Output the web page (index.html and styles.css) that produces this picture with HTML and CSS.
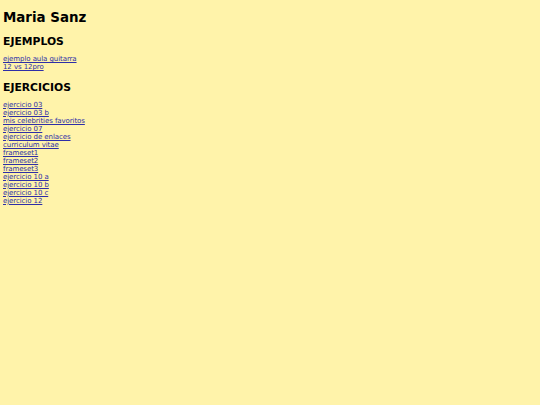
FILE: index.html
```html
<!DOCTYPE html>
<html>
<head>
<meta charset="utf-8">
<link rel="stylesheet" href="styles.css">
</head>
<body>
<h1 class="title">Maria Sanz</h1>
<h2 class="section">EJEMPLOS</h2>
<ul class="links">
<li><a href="#">ejemplo aula guitarra</a></li>
<li><a href="#">12 vs 12pro</a></li>
</ul>
<h2 class="section">EJERCICIOS</h2>
<ul class="links">
<li><a href="#">ejercicio 03</a></li>
<li><a href="#">ejercicio 03 b</a></li>
<li><a href="#">mis celebrities favoritos</a></li>
<li><a href="#">ejercicio 07</a></li>
<li><a href="#">ejercicio de enlaces</a></li>
<li><a href="#">curriculum vitae</a></li>
<li><a href="#">frameset1</a></li>
<li><a href="#">frameset2</a></li>
<li><a href="#">frameset3</a></li>
<li><a href="#">ejercicio 10 a</a></li>
<li><a href="#">ejercicio 10 b</a></li>
<li><a href="#">ejercicio 10 c</a></li>
<li><a href="#">ejercicio 12</a></li>
</ul>
</body>
</html>
```
FILE: styles.css
```css
html, body {
  background: #fff3aa;
}
body {
  margin: 3px;
  font-family: "DejaVu Sans", Verdana, sans-serif;
  color: #000;
}
.title {
  font-size: 13.4px;
  font-weight: bold;
  margin: 7px 0 0 0;
  line-height: 16px;
}
.section {
  font-size: 10.8px;
  font-weight: bold;
  margin: 9.2px 0 0 0;
  line-height: 14px;
}
.links {
  list-style: none;
  margin: 6.2px 0 0 0;
  padding: 0;
  font-size: 7px;
  letter-spacing: -0.08px;
  line-height: 8px;
}
.links a {
  color: #2e2ea8;
}
```
